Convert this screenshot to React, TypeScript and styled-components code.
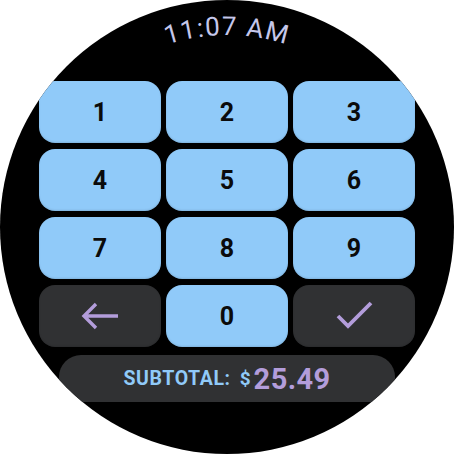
import React from 'react';
import styled, { createGlobalStyle } from 'styled-components';

const GlobalStyle = createGlobalStyle`
  html, body {
    margin: 0;
    padding: 0;
    background: #ffffff;
  }
  body {
    font-family: Roboto, "Liberation Sans", sans-serif;
  }
`;

const Watch = styled.div`
  width: 454px;
  height: 454px;
  border-radius: 50%;
  background: #000000;
  overflow: hidden;
  display: flex;
  flex-direction: column;
  align-items: center;
`;

const Header = styled.div`
  width: 454px;
  height: 81px;
  flex: none;
`;

const TimeText = styled.text`
  font-family: Roboto, "Liberation Sans", sans-serif;
  font-size: 26px;
  letter-spacing: 1.4px;
  fill: #c5c7ea;
`;

const Keypad = styled.div`
  width: 376px;
  display: grid;
  grid-template-columns: repeat(3, 1fr);
  grid-auto-rows: 62px;
  gap: 6px 5px;
`;

const Key = styled.button<{ dark?: boolean }>`
  border: none;
  padding: 0;
  margin: 0;
  border-radius: 16px;
  background: ${p => (p.dark ? '#303133' : '#90caf9')};
  color: #0b0b0b;
  font-family: Roboto, "Liberation Sans", sans-serif;
  font-weight: 700;
  font-size: 25px;
  display: flex;
  align-items: center;
  justify-content: center;
  box-shadow: inset 0 -1px 2px rgba(0, 0, 0, 0.12);
`;

const Subtotal = styled.div`
  margin-top: 8px;
  width: 336px;
  height: 47px;
  flex: none;
  border-radius: 22px;
  background: #303133;
  display: flex;
  align-items: center;
  justify-content: center;
  font-family: Roboto, "Liberation Sans", sans-serif;
  font-weight: 700;
`;

const Label = styled.span`
  color: #90caf9;
  font-size: 19.5px;
  letter-spacing: 0.6px;
  margin-right: 9px;
`;

const Currency = styled.span`
  color: #90caf9;
  font-size: 19px;
  margin-right: 3px;
`;

const Amount = styled.span`
  color: #b39ddb;
  font-size: 29px;
  letter-spacing: 0.4px;
`;

const BackIcon = () => (
  <svg width="40" height="28" viewBox="0 0 40 28">
    <path
      d="M38 14 H5 M16 2 L4 14 L16 26"
      fill="none"
      stroke="#b39ddb"
      strokeWidth="3.4"
      strokeLinecap="butt"
      strokeLinejoin="miter"
    />
  </svg>
);

const CheckIcon = () => (
  <svg width="40" height="30" viewBox="0 0 40 30">
    <path
      d="M4 15 L14 25 L37 2"
      fill="none"
      stroke="#b39ddb"
      strokeWidth="3.8"
    />
  </svg>
);

const digits = ['1', '2', '3', '4', '5', '6', '7', '8', '9'];

const App: React.FC = () => {
  return (
    <>
      <GlobalStyle />
      <Watch>
        <Header>
          <svg width="454" height="81" viewBox="0 0 454 81">
            <defs>
              <path id="timeArc" d="M35 227 A192 192 0 0 1 419 227" />
            </defs>
            <TimeText>
              <textPath href="#timeArc" startOffset="50%" textAnchor="middle">
                11:07 AM
              </textPath>
            </TimeText>
          </svg>
        </Header>
        <Keypad>
          {digits.map(d => (
            <Key key={d}>{d}</Key>
          ))}
          <Key dark aria-label="Backspace">
            <BackIcon />
          </Key>
          <Key>0</Key>
          <Key dark aria-label="Confirm">
            <CheckIcon />
          </Key>
        </Keypad>
        <Subtotal>
          <Label>SUBTOTAL:</Label>
          <Currency>$</Currency>
          <Amount>25.49</Amount>
        </Subtotal>
      </Watch>
    </>
  );
};

export default App;
